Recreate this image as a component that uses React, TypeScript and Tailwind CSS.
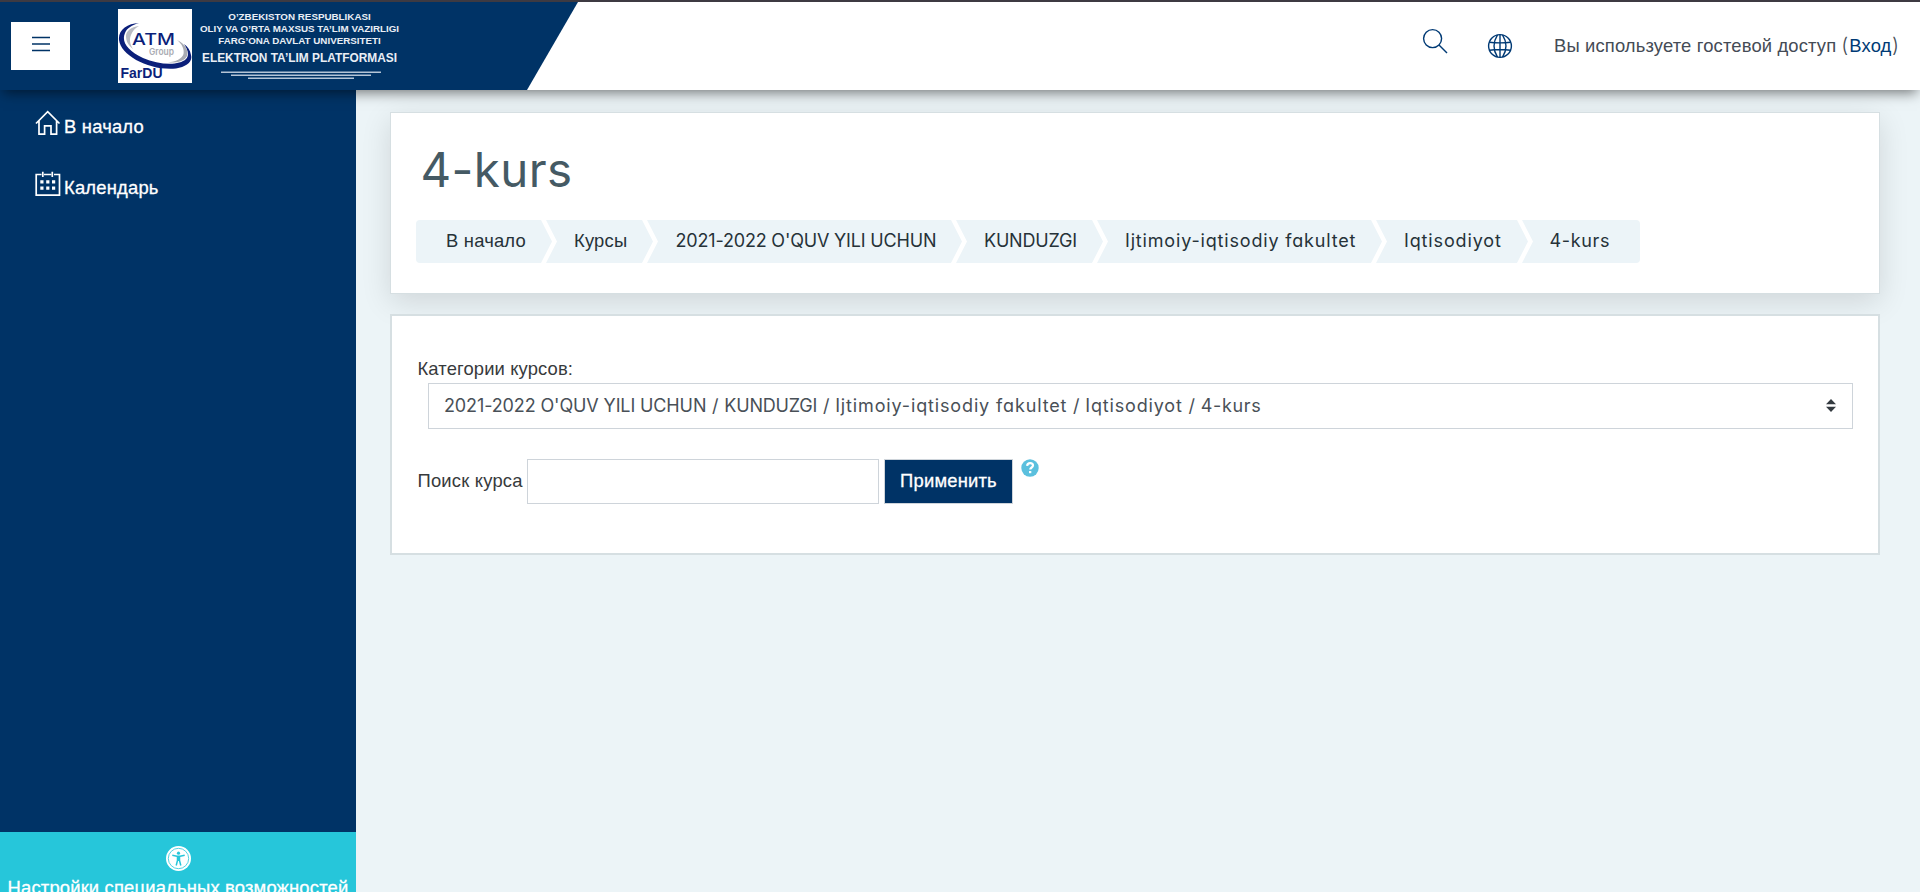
import React from 'react';

const POPPY = "font-['Inter','Liberation_Sans',sans-serif] text-[18px] font-[370] [font-feature-settings:'cv11']";

const crumbs = [
  { text: 'В начало', box: 'w-[136px] pl-[30px] pb-[2px]', font: 'text-[18.4px] tracking-[0.2px]' },
  { text: 'Курсы', box: 'w-[107px] pl-[28px] -ml-[6px] pb-[2px]', font: 'text-[18.4px] tracking-[0.2px]' },
  { text: "2021-2022 O'QUV YILI UCHUN", box: 'w-[315px] pl-[28.5px] -ml-[6px] pb-[2px]', font: POPPY + ' tracking-[-0.18px]' },
  { text: 'KUNDUZGI', box: 'w-[147px] pl-[28px] -ml-[6px] pb-[2px]', font: POPPY + ' tracking-[-0.2px]' },
  { text: 'Ijtimoiy-iqtisodiy fakultet', box: 'w-[285px] pl-[28px] -ml-[6px] pb-[2px]', font: POPPY + ' tracking-[0.83px]' },
  { text: 'Iqtisodiyot', box: 'w-[152px] pl-[28px] -ml-[6px] pb-[2px]', font: POPPY + ' tracking-[0.86px]' },
  { text: '4-kurs', box: 'w-[118px] pl-[27.5px] -ml-[6px] pb-[2px]', font: POPPY + ' tracking-[0.65px]' },
];

const ARROW_FIRST = '[clip-path:polygon(0_0,calc(100%_-_11px)_0,100%_50%,calc(100%_-_11px)_100%,0_100%)] rounded-l-[4px]';
const ARROW_MID = '[clip-path:polygon(0_0,calc(100%_-_11px)_0,100%_50%,calc(100%_-_11px)_100%,0_100%,11px_50%)]';
const ARROW_LAST = '[clip-path:polygon(0_0,100%_0,100%_100%,0_100%,11px_50%)] rounded-r-[4px]';

const selected = [
  { text: "2021-2022 O'QUV YILI UCHUN", cls: 'tracking-[-0.12px]' },
  { text: 'KUNDUZGI', cls: 'tracking-[-0.2px]' },
  { text: 'Ijtimoiy-iqtisodiy fakultet', cls: 'tracking-[0.86px]' },
  { text: 'Iqtisodiyot', cls: 'tracking-[0.83px]' },
  { text: '4-kurs', cls: 'tracking-[0.65px]' },
];

function Logo() {
  return (
    <svg width="74" height="74" viewBox="0 0 74 74" className="ml-[48px] bg-white shrink-0">
      <path d="M21 14C9 14.500 0 21 1 31C3 47 32 62 58 59.500C68 58 75 53 73 46C72 41 70 38 66 35C70 41 71.500 46 68 50C61 57 41 56 25 49C10 42 3 33 7 24C9 19 14 16 21 14Z" fill="#0b1f7a" />
      <path d="M21 17C13 18 8 22 8 27C8 32 10 36 15 40C12 35 11 31 13 26C14.500 22 17 19 21 17Z" fill="#b9bbc2" />
      <path d="M59 31C67 35 71 41 69 47C67 52 59 54 50 53.500C58 52.500 64 50 65.500 45C66.500 40 64 35 59 31Z" fill="#a9abb2" />
      <text x="14" y="35.500" textLength="43" lengthAdjust="spacingAndGlyphs" fontFamily="Inter, sans-serif" fontSize="16.500" fontWeight="500" fill="#0b1f7a">ATM</text>
      <text x="31" y="45.500" textLength="25" lengthAdjust="spacingAndGlyphs" fontFamily="Inter, sans-serif" fontSize="9.500" fontWeight="600" fill="#a9abb2">Group</text>
      <text x="2.500" y="69" textLength="42" lengthAdjust="spacingAndGlyphs" fontFamily="Liberation Sans, sans-serif" fontSize="15" fontWeight="700" fill="#0b1f7a">FarDU</text>
    </svg>
  );
}

function Header() {
  return (
    <header className="relative z-10 flex h-[90px] border-t-2 border-[#3d3a42] bg-white shadow-[0_6px_12px_-3px_rgba(0,0,0,0.5)]">
      <div className="flex h-[88px] w-[578px] shrink-0 bg-[#003366] [clip-path:polygon(0_0,100%_0,527px_100%,0_100%)]">
        <button className="ml-[11px] mt-[20px] flex h-12 w-[59px] shrink-0 items-center justify-center bg-white">
          <svg width="18" height="16" viewBox="0 0 18 16" stroke="#003366" strokeWidth="1.400" className="-mt-[5px] ml-[1px]">
            <path d="M0 1.500H18M0 8H18M0 14.500H18" />
          </svg>
        </button>
        <div className="mt-[7px] flex">
          <Logo />
          <div className="ml-[7.5px] flex w-[200px] flex-col items-center whitespace-nowrap font-['Liberation_Sans',sans-serif] font-bold text-[#e9eef5]">
            <div className="mt-[2px] text-[9.8px] leading-[12px]">O’ZBEKISTON RESPUBLIKASI</div>
            <div className="text-[9.8px] leading-[12px]">OLIY VA O’RTA MAXSUS TA’LIM VAZIRLIGI</div>
            <div className="text-[9.8px] leading-[12px]">FARG’ONA DAVLAT UNIVERSITETI</div>
            <div className="mt-[3px] text-[11.9px] leading-[16px]">ELEKTRON TA’LIM PLATFORMASI</div>
            <svg width="160" height="9" viewBox="0 0 160 9" className="mt-[4.5px] ml-[2px]" fill="#b4c4d6">
              <path d="M0 0.500H160V2H0ZM10 3.500H150V5H10ZM27 6.500H133V8H27Z" />
            </svg>
          </div>
        </div>
      </div>
      <div className="flex flex-1 items-center justify-end pr-[20px] pb-[1px]">
        <svg width="26" height="26" viewBox="0 0 26 26" fill="none" stroke="#003a75" strokeWidth="1.400" className="-mt-[9px]">
          <circle cx="10.600" cy="10.600" r="9" />
          <path d="M17 17L25 25" />
        </svg>
        <svg width="26" height="26" viewBox="0 0 26 26" fill="none" stroke="#003a75" strokeWidth="1.400" className="ml-[39px]">
          <circle cx="13" cy="13" r="11.400" />
          <path d="M13 1.600V24.400M2.300 9.200Q13 10.600 23.700 9.200M2.300 17.200Q13 15.800 23.700 17.200" />
          <path d="M10.500 1.800Q3.500 13 10.500 24.200M15.500 1.800Q22.500 13 15.500 24.200" />
        </svg>
        <div className="ml-[40.5px] flex items-center whitespace-nowrap text-[18.4px] tracking-[0.15px] text-[#444b55]">
          <span>Вы используете гостевой доступ</span>
          <span className="ml-[5px] w-[8px] font-['Inter',sans-serif] text-[20px] leading-[24px] font-[350]">(</span>
          <a className="text-[#003a75]">Вход</a>
          <span className="ml-[0.5px] w-[8px] font-['Inter',sans-serif] text-[20px] leading-[24px] font-[350]">)</span>
        </div>
      </div>
    </header>
  );
}

function Sidebar() {
  return (
    <aside className="flex h-[802px] w-[356px] shrink-0 flex-col bg-[#003366] text-[18.4px] text-white">
      <nav className="flex-1 pt-[6px] tracking-[0.2px] [-webkit-text-stroke:0.3px]">
        <a className="flex h-[61px] items-center pl-[34.5px]">
          <svg width="26" height="26" viewBox="0 0 26 26" fill="none" stroke="white" strokeWidth="1.700" className="-mt-[8px]">
            <path d="M1 13.500L12.700 1.700L24.500 13.500M4 10.800V24.200H9.600V15.800H16V24.200H21.600V10.800" />
          </svg>
          <span className="ml-[3.5px]">В начало</span>
        </a>
        <a className="flex h-[61px] items-center pl-[34.5px]">
          <svg width="26" height="26" viewBox="0 0 26 26" fill="none" stroke="white" strokeWidth="1.700" className="-mt-[8px]">
            <path d="M6.500 3.500H1.200V24.200H24.500V3.500H19M9 3.500H16.200M7.800 0.800V6M17.300 0.800V6" />
            <path d="M5.300 10.800H8.500M11.200 10.800H14.400M17 10.800H20.200M5.300 17.200H8.500M11.200 17.200H14.400M17 17.200H20.200" strokeWidth="3.200" />
          </svg>
          <span className="ml-[3.5px]">Календарь</span>
        </a>
      </nav>
      <div className="flex h-[60px] flex-col items-center overflow-hidden bg-[#26c6da] pt-[14px]">
        <svg width="25" height="25" viewBox="0 0 25 25" className="shrink-0">
          <circle cx="12.500" cy="12.500" r="12.500" fill="white" />
          <circle cx="12.500" cy="12.500" r="10.200" fill="none" stroke="#26c6da" strokeWidth="0.800" />
          <circle cx="12.500" cy="7.200" r="1.600" fill="#26c6da" />
          <path d="M6.300 9.300L11 10.300H14L18.700 9.300M12.500 10V15M11.500 10.500V14.500L10.200 19.500M13.500 10.500V14.500L14.800 19.500" fill="none" stroke="#26c6da" strokeWidth="1.500" />
        </svg>
        <div className="mt-[7px] shrink-0 whitespace-nowrap leading-[20px] tracking-[0.17px] [-webkit-text-stroke:0.3px]">
          Настройки специальных возможностей
        </div>
      </div>
    </aside>
  );
}

function Breadcrumb() {
  return (
    <nav className="mt-[22px] ml-[25px] flex h-[43px]">
      {crumbs.map((c, i) => (
        <div
          key={c.text}
          className={`flex shrink-0 items-center whitespace-nowrap bg-[#ecf4f8] text-[#263238] ${c.box} ${c.font} ${
            i === 0 ? ARROW_FIRST : i === crumbs.length - 1 ? ARROW_LAST : ARROW_MID
          }`}
        >
          {c.text}
        </div>
      ))}
    </nav>
  );
}

export default function App() {
  return (
    <div className="h-[892px] w-[1920px] overflow-hidden bg-[#ecf4f7] font-['Liberation_Sans',Arial,sans-serif] text-[18.4px]">
      <Header />
      <div className="flex">
        <Sidebar />
        <main className="flex flex-1 flex-col pl-[34px] pt-[22px]">
          <section className="h-[182px] w-[1490px] border border-[#d6dfe2] bg-white pt-[29px] shadow-[0_8px_28px_rgba(0,0,0,0.12)]">
            <h1 className="ml-[29.5px] font-['Inter',sans-serif] text-[47.5px] font-[380] leading-[56px] tracking-[0.4px] text-[#455a64]">4-kurs</h1>
            <Breadcrumb />
          </section>
          <section className="relative mt-[20px] h-[241px] w-[1490px] border-2 border-[#d6dfe2] bg-white pl-[25px] pt-[39px] text-[#373a3c]">
            <div className="pl-[0.5px] leading-[27px] tracking-[0.13px]">Категории курсов:</div>
            <div className={`mt-[1px] ml-[11px] flex h-[46px] w-[1425px] items-center justify-between whitespace-nowrap border border-[#ced4da] pb-px pl-[15px] pr-[16px] text-[#495057] ${POPPY}`}>
              <div className="flex">
                {selected.map((s, i) => (
                  <React.Fragment key={s.text}>
                    {i > 0 && <span className="w-[18px] text-center">/</span>}
                    <span className={s.cls}>{s.text}</span>
                  </React.Fragment>
                ))}
              </div>
              <svg width="10" height="13" viewBox="0 0 10 13" fill="#343a40">
                <path d="M0 5.300L5 0L10 5.300ZM0 7.700L5 13L10 7.700Z" />
              </svg>
            </div>
            <div className="mt-[30px] flex h-[45px]">
              <label className="flex w-[110px] items-center whitespace-nowrap pb-[2px] pl-[0.5px] tracking-[0.2px]">Поиск курса</label>
              <input className="h-[45px] w-[352px] border border-[#ced4da] bg-white outline-none" />
              <button className="ml-[5px] flex h-[45px] w-[129px] items-center justify-center border border-[#ced4da] bg-[#003366] pb-[2px] tracking-[0.2px] text-white [-webkit-text-stroke:0.3px]">
                Применить
              </button>
              <svg width="18" height="18" viewBox="0 0 18 18" className="ml-[8px]">
                <circle cx="9" cy="9" r="8.700" fill="#5bc0de" />
                <path d="M6.100 6.800C6.300 5 7.500 4.100 9.100 4.100C10.800 4.100 12 5.100 12 6.500C12 8.500 9.200 8.500 9.200 10.600" fill="none" stroke="white" strokeWidth="2.200" />
                <path d="M8 12H10.300V14.200H8Z" fill="white" />
              </svg>
            </div>
          </section>
        </main>
      </div>
    </div>
  );
}
